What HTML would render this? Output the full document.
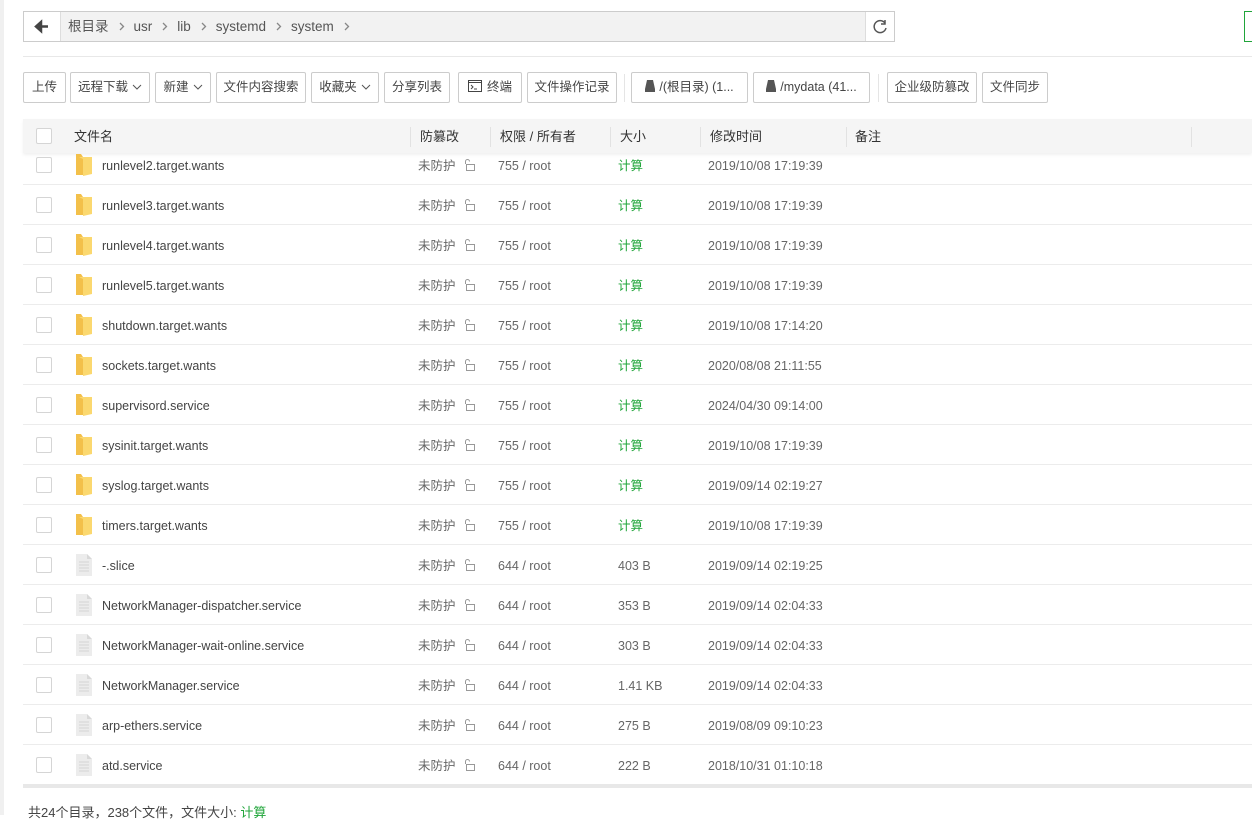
<!DOCTYPE html>
<html><head><meta charset="utf-8"><style>
*{box-sizing:border-box;margin:0;padding:0}
body{width:1252px;height:815px;overflow:hidden;background:#fff;font-family:"Liberation Sans","Noto Sans CJK SC",sans-serif;font-size:12px;color:#555;position:relative}
.ls{position:absolute;left:0;top:0;width:4px;height:815px;background:#f0f0f0}
.crumb{position:absolute;left:23px;top:11px;width:872px;height:31px;border:1px solid #ccc;background:#f2f2f2}
.back{position:absolute;left:0;top:0;width:37px;height:29px;background:#fff;border-right:1px solid #ddd}
.refresh{position:absolute;right:0;top:0;width:29px;height:29px;background:#fff;border-left:1px solid #ddd}
.crumb .path{position:absolute;left:44px;top:0;line-height:29px;font-size:13.5px;color:#555}
.crumb .path svg{margin:0 9px 0 10px;vertical-align:0}
.green{position:absolute;left:1244px;top:11px;width:20px;height:31px;border:1px solid #20a53a}
.hr{position:absolute;left:23px;right:0;top:56px;height:1px;background:#e8e8e8}
.btn{position:absolute;top:72px;height:31px;border:1px solid #ccc;border-radius:2px;background:#fff;font-size:12.5px;color:#444;line-height:29px;text-align:center;white-space:nowrap}
.btn .ch{margin-left:4px;vertical-align:1px}
.sep{position:absolute;top:74px;width:1px;height:28px;background:#e5e5e5}
.thead{position:absolute;left:23px;top:119px;width:1229px;height:34px;background:#f5f5f5;box-shadow:0 2px 3px rgba(0,0,0,.06)}
.th{position:absolute;top:0;line-height:36px;font-size:13px;color:#333}
.cs{position:absolute;top:8px;width:1px;height:20px;background:#e2e2e2}
.cb{position:absolute;width:16px;height:16px;border:1px solid #d5d5d5;border-radius:2px;background:#fff}
.body{position:absolute;left:23px;top:153px;width:1229px;height:632px;overflow:hidden}
.row{position:absolute;left:0;width:1229px;height:40px;border-bottom:1px solid #ececec}
.row .t{position:absolute;top:1px;line-height:40px;height:40px;font-size:12.5px;white-space:nowrap}
.bbar{position:absolute;left:23px;top:784px;width:1229px;height:4px;background:#e8e8e8}
.foot{position:absolute;left:28px;top:804px;line-height:18px;font-size:13px;color:#444}
</style></head><body>
<div class="ls"></div>
<div class="crumb">
 <div class="back"><svg width="37" height="29"><path d="M12 14.5h12M12 14.5l5-4.5v9z" stroke="#444" stroke-width="2.5" fill="#444"/></svg></div>
 <div class="path">根目录<svg width="6" height="9"><path d="M1 1l3.5 3.5L1 8" stroke="#888" fill="none" stroke-width="1.3"/></svg>usr<svg width="6" height="9"><path d="M1 1l3.5 3.5L1 8" stroke="#888" fill="none" stroke-width="1.3"/></svg>lib<svg width="6" height="9"><path d="M1 1l3.5 3.5L1 8" stroke="#888" fill="none" stroke-width="1.3"/></svg>systemd<svg width="6" height="9"><path d="M1 1l3.5 3.5L1 8" stroke="#888" fill="none" stroke-width="1.3"/></svg>system<svg width="6" height="9"><path d="M1 1l3.5 3.5L1 8" stroke="#888" fill="none" stroke-width="1.3"/></svg></div>
 <div class="refresh"><svg width="29" height="29"><path d="M19 11a6 6 0 1 0 1 5" stroke="#555" stroke-width="1.5" fill="none"/><path d="M19 8v4h-4" stroke="#555" stroke-width="1.5" fill="none"/></svg></div>
</div>
<div class="green"></div>
<div class="hr"></div>

<div class="btn" style="left:23px;width:43px">上传</div>
<div class="btn" style="left:70px;width:80px">远程下载<svg class="ch" width="10" height="6"><path d="M1 1l4 4 4-4" stroke="#555" fill="none"/></svg></div>
<div class="btn" style="left:155px;width:56px">新建<svg class="ch" width="10" height="6"><path d="M1 1l4 4 4-4" stroke="#555" fill="none"/></svg></div>
<div class="btn" style="left:216px;width:90px">文件内容搜索</div>
<div class="btn" style="left:311px;width:68px">收藏夹<svg class="ch" width="10" height="6"><path d="M1 1l4 4 4-4" stroke="#555" fill="none"/></svg></div>
<div class="btn" style="left:384px;width:66px">分享列表</div>
<div class="btn" style="left:458px;width:64px"><svg width="14" height="12" style="vertical-align:-1px;margin-right:5px"><rect x=".5" y=".5" width="13" height="11" fill="none" stroke="#444"/><path d="M.5 2.5h13M3 5l2 2-2 2M6 9h3" stroke="#444" fill="none"/></svg>终端</div>
<div class="btn" style="left:527px;width:90px">文件操作记录</div>
<div class="sep" style="left:624px"></div>
<div class="btn" style="left:631px;width:117px"><svg width="10" height="12" style="vertical-align:-1px;margin-right:4px"><path d="M2 0h6l2 9H0z" fill="#555"/><rect y="9" width="10" height="3" fill="#555"/></svg>/(根目录) (1...</div>
<div class="btn" style="left:753px;width:117px"><svg width="10" height="12" style="vertical-align:-1px;margin-right:4px"><path d="M2 0h6l2 9H0z" fill="#555"/><rect y="9" width="10" height="3" fill="#555"/></svg>/mydata (41...</div>
<div class="sep" style="left:878px"></div>
<div class="btn" style="left:887px;width:90px">企业级防篡改</div>
<div class="btn" style="left:982px;width:66px">文件同步</div>

<div class="thead">
 <div class="cb" style="left:13px;top:9px"></div>
 <div class="th" style="left:51px">文件名</div>
 <div class="cs" style="left:387px"></div><div class="th" style="left:397px">防篡改</div>
 <div class="cs" style="left:467px"></div><div class="th" style="left:477px">权限 / 所有者</div>
 <div class="cs" style="left:587px"></div><div class="th" style="left:597px">大小</div>
 <div class="cs" style="left:677px"></div><div class="th" style="left:687px">修改时间</div>
 <div class="cs" style="left:823px"></div><div class="th" style="left:832px">备注</div>
 <div class="cs" style="left:1168px"></div>
</div>

<div class="body" id="b"></div>
<div class="bbar"></div>
<div class="foot">共24个目录，238个文件，文件大小: <span style="color:#20a53a">计算</span></div>
<script>
var rows=[["runlevel2.target.wants",1,"755","计算","2019/10/08 17:19:39"],
["runlevel3.target.wants",1,"755","计算","2019/10/08 17:19:39"],
["runlevel4.target.wants",1,"755","计算","2019/10/08 17:19:39"],
["runlevel5.target.wants",1,"755","计算","2019/10/08 17:19:39"],
["shutdown.target.wants",1,"755","计算","2019/10/08 17:14:20"],
["sockets.target.wants",1,"755","计算","2020/08/08 21:11:55"],
["supervisord.service",1,"755","计算","2024/04/30 09:14:00"],
["sysinit.target.wants",1,"755","计算","2019/10/08 17:19:39"],
["syslog.target.wants",1,"755","计算","2019/09/14 02:19:27"],
["timers.target.wants",1,"755","计算","2019/10/08 17:19:39"],
["-.slice",0,"644","403 B","2019/09/14 02:19:25"],
["NetworkManager-dispatcher.service",0,"644","353 B","2019/09/14 02:04:33"],
["NetworkManager-wait-online.service",0,"644","303 B","2019/09/14 02:04:33"],
["NetworkManager.service",0,"644","1.41 KB","2019/09/14 02:04:33"],
["arp-ethers.service",0,"644","275 B","2019/08/09 09:10:23"],
["atd.service",0,"644","222 B","2018/10/31 01:10:18"]];
var folder='<svg width="18" height="24" style="position:absolute;left:52px;top:8px"><path d="M1 1h5l2 3v18H1z" fill="#f3c04a"/><path d="M4 4h13v17l-9 2V6z" fill="#fbd86f"/></svg>';
var file='<svg width="16" height="22" style="position:absolute;left:53px;top:9px"><path d="M0 0h11l5 5v17H0z" fill="#ececec"/><path d="M11 0v5h5" fill="#d8d8d8"/><path d="M3 8h10M3 11h10M3 14h10M3 17h10" stroke="#d4d4d4"/></svg>';
var lock='<svg width="12" height="12" style="position:absolute;left:440px;top:14px"><path d="M2.5 5V2.5a2 2 0 0 1 4 0" fill="none" stroke="#999"/><rect x="3.5" y="5.5" width="8" height="6" fill="none" stroke="#999"/></svg>';
var h='';
rows.forEach(function(r,i){
 var top=-8+i*40;
 h+='<div class="row" style="top:'+top+'px"><div class="cb" style="left:13px;top:12px"></div>'+(r[1]?folder:file)+
 '<div class="t" style="left:79px;color:#444">'+r[0]+'</div><div class="t" style="left:395px;color:#666">未防护</div>'+lock+
 '<div class="t" style="left:475px;color:#666">'+r[2]+' / root</div><div class="t" style="left:595px;color:'+(r[1]?'#20a53a':'#666')+'">'+r[3]+
 '</div><div class="t" style="left:685px;color:#666">'+r[4]+'</div></div>';
});
document.getElementById('b').innerHTML=h;
</script>
</body></html>
